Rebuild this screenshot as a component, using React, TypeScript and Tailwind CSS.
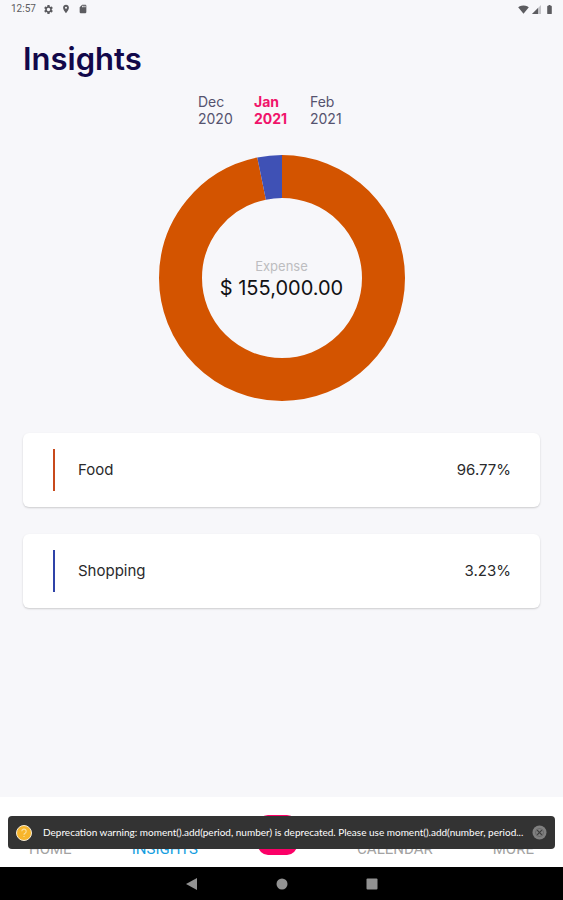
import React from "react";
import {
  MdBatteryFull,
  MdLocationOn,
  MdSdCard,
  MdSettings,
  MdSignalWifi4Bar,
} from "react-icons/md";

interface Category {
  name: string;
  share: number;
  color: string;
  barClass: string;
}

const months = [
  { month: "Dec", year: "2020", active: false },
  { month: "Jan", year: "2021", active: true },
  { month: "Feb", year: "2021", active: false },
];

const categories: Category[] = [
  { name: "Food", share: 96.77, color: "#d35400", barClass: "bg-[#c84a1c]" },
  { name: "Shopping", share: 3.23, color: "#3f51b5", barClass: "bg-[#2f43a8]" },
];

const StatusBar = () => (
  <div className="flex h-[18px] items-center justify-between pl-[11px] pr-2 text-[#5c5c60]">
    <div className="flex items-center gap-[7px]">
      <span className="font-['Roboto',sans-serif] text-[10px] leading-none">12:57</span>
      <MdSettings size={11} />
      <MdLocationOn size={10} />
      <MdSdCard size={10} />
    </div>
    <div className="flex items-center gap-[3px]">
      <MdSignalWifi4Bar size={11} />
      <svg width="9" height="9" viewBox="0 0 9 9">
        <path d="M9 0v9H0z" fill="#c4c4c8" />
        <path d="M6 3v6H0z" fill="#5c5c60" />
      </svg>
      <MdBatteryFull size={11} />
    </div>
  </div>
);

const DonutChart = () => {
  const radius = 101.5;
  let offset = 0;
  return (
    <div className="relative mx-auto size-[246px]">
      <svg viewBox="0 0 246 246" className="size-full -rotate-90">
        {categories.map((c) => {
          const start = offset;
          offset += c.share;
          return (
            <circle
              key={c.name}
              cx="123"
              cy="123"
              r={radius}
              fill="none"
              stroke={c.color}
              strokeWidth="43"
              pathLength="100"
              strokeDasharray={`${c.share} ${100 - c.share}`}
              strokeDashoffset={-start}
            />
          );
        })}
      </svg>
      <div className="absolute inset-0 flex flex-col items-center justify-center">
        <span className="text-[13px] leading-5 text-[#bdbdc0]">Expense</span>
        <span className="text-xl leading-6 text-[#111114]">$ 155,000.00</span>
      </div>
    </div>
  );
};

const CategoryCard = ({ name, share, barClass }: Category) => (
  <li className="flex h-[74px] items-center rounded-md bg-white pl-[30px] pr-[29px] text-[15px] text-[#2a2a2c] shadow-[0_1px_2px_rgba(0,0,0,0.18)]">
    <span className={`h-[42px] w-[2px] ${barClass}`} />
    <span className="ml-[23px] flex-1">{name}</span>
    <span>{share.toFixed(2)}%</span>
  </li>
);

const Toast = () => (
  <div
    role="alert"
    className="absolute inset-x-2 top-[19px] flex h-[33px] items-center rounded bg-[#333333] px-2 font-['Lato',sans-serif] text-[10px] text-white"
  >
    <svg width="16" height="16" viewBox="0 0 16 16" className="shrink-0">
      <circle cx="8" cy="8" r="7.5" fill="#f7b52c" stroke="#f5ecd8" />
      <path
        d="M5.8 6.3a2.2 2.2 0 1 1 3.3 1.9c-.8.4-1.1.8-1.1 1.5M8 11v1"
        fill="none"
        stroke="#fbe0a0"
        strokeWidth="1.1"
      />
    </svg>
    <p className="ml-[11px] flex-1 whitespace-nowrap">
      Deprecation warning: moment().add(period, number) is deprecated. Please use moment().add(number, period...
    </p>
    <button type="button" aria-label="Dismiss" className="shrink-0">
      <svg width="15" height="15" viewBox="0 0 15 15">
        <circle cx="7.5" cy="7.5" r="7" fill="#808080" />
        <path d="M5.2 5.2l4.6 4.6M9.8 5.2L5.2 9.8" stroke="#3c3c3c" strokeWidth="1.2" />
        <circle cx="7.5" cy="7.5" r="4" fill="none" stroke="#5c5c5c" strokeWidth="0.7" />
      </svg>
    </button>
  </div>
);

const TabBar = () => (
  <div className="relative h-[70px] bg-white">
    <nav className="flex h-full items-end justify-between px-[29px] pb-3 font-['Roboto',sans-serif] text-[15px] leading-3 text-[#a3a3a3]">
      <a href="#home">HOME</a>
      <a href="#insights" className="text-[#169ee0]">INSIGHTS</a>
      <button
        type="button"
        aria-label="Add"
        className="h-10 w-[39px] rounded-[10px] bg-[#fb0067]"
      />
      <a href="#calendar">CALENDAR</a>
      <a href="#more">MORE</a>
    </nav>
    <Toast />
  </div>
);

const SystemNav = () => (
  <div className="flex h-[33px] items-center justify-center gap-[78px] bg-black text-[#929292]">
    <button type="button" aria-label="Back">
      <svg width="12" height="12" viewBox="0 0 12 12">
        <path d="M11 0v12L0 6z" fill="currentColor" />
      </svg>
    </button>
    <button type="button" aria-label="Home">
      <svg width="12" height="12" viewBox="0 0 12 12">
        <circle cx="6" cy="6" r="5.5" fill="currentColor" />
      </svg>
    </button>
    <button type="button" aria-label="Recent apps">
      <svg width="12" height="12" viewBox="0 0 12 12">
        <rect x="0.5" y="0.5" width="11" height="11" rx="1" fill="currentColor" />
      </svg>
    </button>
  </div>
);

export default function App() {
  return (
    <div className="flex min-h-screen flex-col bg-[#f7f7fa] font-['Inter',sans-serif]">
      <StatusBar />
      <main className="flex-1 px-[23px] pt-[21px]">
        <h1 className="text-[31px] font-semibold leading-10 text-[#12084a]">Insights</h1>

        <div className="mt-[14px] flex justify-center gap-[21px] pr-5">
          {months.map((m) => (
            <button
              key={m.month}
              type="button"
              className={`w-[35px] text-left text-sm leading-[17px] ${
                m.active ? "font-bold text-[#f0146a]" : "text-[#55536f]"
              }`}
            >
              {m.month}
              <br />
              {m.year}
            </button>
          ))}
        </div>

        <div className="mt-7">
          <DonutChart />
        </div>

        <ul className="mt-8 flex flex-col gap-[27px]">
          {categories.map((c) => (
            <CategoryCard key={c.name} {...c} />
          ))}
        </ul>
      </main>
      <TabBar />
      <SystemNav />
    </div>
  );
}
